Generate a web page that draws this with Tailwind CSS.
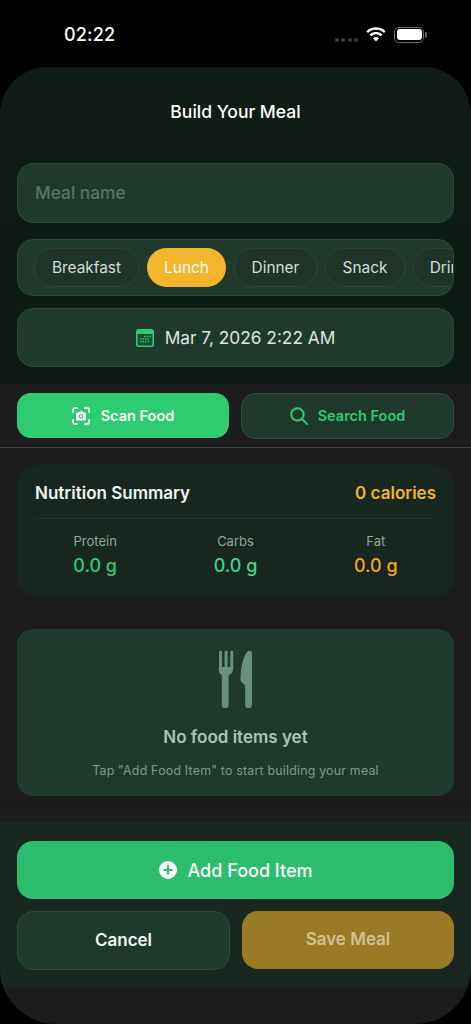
<!DOCTYPE html>
<html lang="en">
<head>
    <meta charset="UTF-8">
    <meta name="viewport" content="width=device-width, initial-scale=1.0">
    <title>Build Your Meal</title>
    <script src="https://cdn.jsdelivr.net/npm/@tailwindcss/browser@4"></script>
</head>
<body class="bg-black font-['Inter',sans-serif]">
    <div class="flex flex-col w-[471px] h-[1024px] overflow-hidden">
        <!-- Status bar -->
        <div class="h-[67px] shrink-0 relative flex items-start justify-between pl-[64px] pr-[44px] pt-[23px]">
            <span class="text-white text-[18px] leading-[24px] font-medium tracking-[0.2px]">02:22</span>
            <div class="flex items-center gap-[6px] h-[24px]">
                <div class="flex gap-[2.5px] mt-[9px]">
                    <span class="w-[4px] h-[4px] rounded-full bg-[#3d3d3d]"></span>
                    <span class="w-[4px] h-[4px] rounded-full bg-[#3d3d3d]"></span>
                    <span class="w-[4px] h-[4px] rounded-full bg-[#3d3d3d]"></span>
                    <span class="w-[4px] h-[4px] rounded-full bg-[#3d3d3d]"></span>
                </div>
                <svg width="20" height="15" viewBox="0 0 20 15" class="mx-[2px] -mt-[2px]">
                    <path d="M1.2 5.2 A12.4 12.4 0 0 1 18.8 5.2" fill="none" stroke="#fff" stroke-width="2.4"/>
                    <path d="M4.4 8.4 A7.9 7.9 0 0 1 15.6 8.4" fill="none" stroke="#fff" stroke-width="2.4"/>
                    <path d="M10 14.6 L6.9 11.2 A4.4 4.4 0 0 1 13.1 11.2 Z" fill="#fff"/>
                </svg>
                <div class="flex items-center -mt-[1px]">
                    <div class="w-[30px] h-[16px] rounded-[5px] border border-[#6a6a6a] p-[1.5px]">
                        <div class="w-full h-full rounded-[3px] bg-white"></div>
                    </div>
                    <span class="w-[2px] h-[6px] ml-[1px] rounded-r-full bg-[#6a6a6a]"></span>
                </div>
            </div>
        </div>

        <!-- Sheet -->
        <div class="flex-1 flex flex-col rounded-t-[48px] rounded-b-[56px] overflow-hidden bg-[#1c1c1e]">
            <!-- Form section -->
            <div class="h-[317px] shrink-0 px-[17px] bg-gradient-to-b from-[#0f1d16] to-[#0e1a14]">
                <h1 class="h-[96px] pt-[33px] text-center text-white text-[17.5px] leading-[24px] font-medium">Build Your Meal</h1>
                <div class="h-[60px] flex items-center px-[17px] rounded-[16px] bg-[#1f3a2d] border border-[#2a4a39] text-[#557566] text-[17.300px] font-medium">Meal name</div>
                <div class="mt-[16px] h-[57px] flex items-center gap-[8px] pl-[16px] rounded-[16px] bg-[#1f3a2d] border border-[#2a4a39] overflow-hidden">
                    <span class="shrink-0 h-[39px] w-[105px] flex items-center justify-center rounded-full bg-[#1f3329] border border-[#2b4436] text-[#d5ddd8] text-[15.400px]">Breakfast</span>
                    <span class="shrink-0 h-[39px] w-[79px] flex items-center justify-center rounded-full bg-[#f2b52c] text-white text-[15.400px]">Lunch</span>
                    <span class="shrink-0 h-[39px] w-[83px] flex items-center justify-center rounded-full bg-[#1f3329] border border-[#2b4436] text-[#d5ddd8] text-[15.400px]">Dinner</span>
                    <span class="shrink-0 h-[39px] w-[80px] flex items-center justify-center rounded-full bg-[#1f3329] border border-[#2b4436] text-[#d5ddd8] text-[15.400px]">Snack</span>
                    <span class="shrink-0 h-[39px] w-[80px] flex items-center justify-center rounded-full bg-[#1f3329] border border-[#2b4436] text-[#d5ddd8] text-[15.400px]">Drinks</span>
                </div>
                <div class="mt-[12px] h-[59px] flex items-center justify-center gap-[11px] rounded-[16px] bg-[#1f3a2d] border border-[#2a4a39] text-[#dfe5e1] text-[17.300px]">
                    <svg width="18" height="18" viewBox="0 0 18 18">
                        <rect x="0.8" y="0.8" width="16.4" height="16.4" rx="2" fill="#1f4a33" stroke="#2ecc71" stroke-width="1.6"/>
                        <rect x="1" y="1" width="16" height="4" fill="#2ecc71"/>
                        <path d="M8 7.5h1.5M10.8 7.5h1.5M13.3 7.5h1.5M4 10h1.5M6.5 10h1.5M9 10h1.5M11.5 10h1.5M4 12.6h1.5M6.5 12.6h1.5M9 12.6h1.5M11.5 12.6h1.5" stroke="#2ecc71" stroke-width="1.3" fill="none"/>
                    </svg>
                    <span>Mar 7, 2026 2:22 AM</span>
                </div>
            </div>

            <!-- Scan / search -->
            <div class="h-[64px] shrink-0 flex gap-[12px] px-[17px] pt-[9px] border-b border-[#34443c]">
                <div class="w-[212px] h-[45px] flex items-center justify-center gap-[11px] rounded-[14px] bg-[#2ecc71] text-white text-[14.500px] font-semibold">
                    <svg width="18" height="18" viewBox="0 0 18 18" fill="none">
                        <path d="M1 5V3a2 2 0 0 1 2-2h2M13 1h2a2 2 0 0 1 2 2v2M17 13v2a2 2 0 0 1-2 2h-2M5 17H3a2 2 0 0 1-2-2v-2" stroke="#fff" stroke-width="1.8" stroke-linecap="round"/>
                        <path d="M4 6.4a1 1 0 0 1 1-1h1.700l.9-1.200h2.800l.9 1.200H13a1 1 0 0 1 1 1v6a1 1 0 0 1-1 1H5a1 1 0 0 1-1-1z" fill="#fff"/>
                        <circle cx="9" cy="9.2" r="2.2" fill="#2ecc71"/>
                        <circle cx="9" cy="9.2" r="1.1" fill="#fff"/>
                    </svg>
                    <span>Scan Food</span>
                </div>
                <div class="w-[213px] h-[46px] flex items-center justify-center gap-[10px] rounded-[14px] bg-[#1f3a2d] border border-[#2a4f3b] text-[#2ecc71] text-[14.500px] font-semibold">
                    <svg width="18" height="18" viewBox="0 0 18 18" fill="none" stroke="#2ecc71" stroke-width="2" stroke-linecap="round">
                        <circle cx="7.4" cy="7.4" r="6.2"/>
                        <path d="M12 12l5 5"/>
                    </svg>
                    <span>Search Food</span>
                </div>
            </div>

            <!-- Nutrition summary -->
            <div class="mx-[17px] mt-[17px] h-[131px] shrink-0 rounded-[18px] bg-[#17271f] px-[18px]">
                <div class="h-[54px] pt-[5px] flex items-center justify-between border-b border-[#20322a]">
                    <span class="text-[#f2f5f3] text-[17px] font-semibold">Nutrition Summary</span>
                    <span class="text-[#f0b429] text-[17px] font-semibold">0 calories</span>
                </div>
                <div class="grid grid-cols-3 gap-[20px] pt-[13px]">
                    <div class="flex flex-col items-center">
                        <span class="text-[#93a89d] text-[13px] leading-[18px]">Protein</span>
                        <span class="mt-[3px] text-[#2ecc71] text-[18px] leading-[26px] font-medium">0.0 g</span>
                    </div>
                    <div class="flex flex-col items-center">
                        <span class="text-[#93a89d] text-[13px] leading-[18px]">Carbs</span>
                        <span class="mt-[3px] text-[#3dd68c] text-[18px] leading-[26px] font-medium">0.0 g</span>
                    </div>
                    <div class="flex flex-col items-center">
                        <span class="text-[#93a89d] text-[13px] leading-[18px]">Fat</span>
                        <span class="mt-[3px] text-[#f5a623] text-[18px] leading-[26px] font-medium">0.0 g</span>
                    </div>
                </div>
            </div>

            <!-- Empty state -->
            <div class="mx-[17px] mt-[33px] h-[167px] shrink-0 rounded-[16px] bg-[#1f3a2d] flex flex-col items-center pt-[21px]">
                <svg width="36" height="58" viewBox="0 0 36 58" fill="#6a8f7f">
                    <path d="M1 2a1.500 1.500 0 0 1 3 0v15h2.600V2a1.500 1.500 0 0 1 3 0v15h2.700V2a1.500 1.500 0 0 1 3 0v16c0 4-2.200 6.400-4.700 7.300V55a3.400 3.400 0 0 1-6.800 0V25.300C2.200 24.400 0 22 1 18z"/>
                    <path d="M28.500 2.400c1-2 5.500-2.600 5.500.6V55a3.400 3.400 0 0 1-6.800 0V35.500l-3.400-3.200c-1-.9-1.300-1.800-1.300-3.100C22.500 19 24.500 9 28.500 2.400z"/>
                </svg>
                <span class="mt-[17px] text-[#a9c4b6] text-[17px] leading-[24px] font-semibold">No food items yet</span>
                <span class="mt-[13px] text-[#7e9a8c] text-[12.400px] leading-[18px] tracking-[0.2px]">Tap "Add Food Item" to start building your meal</span>
            </div>

            <!-- Footer actions -->
            <div class="mt-[26px] h-[165px] shrink-0 bg-[#18271f] px-[17px] pt-[19px] shadow-[0_-8px_14px_rgba(24,39,31,0.25)]">
                <div class="h-[58px] flex items-center justify-center gap-[11px] rounded-[16px] bg-[#2dbd6e] text-white text-[18px] font-medium">
                    <svg width="18" height="18" viewBox="0 0 18 18">
                        <circle cx="9" cy="9" r="9" fill="#fff"/>
                        <path d="M9 5v8M5 9h8" stroke="#2dbd6e" stroke-width="2" stroke-linecap="round"/>
                    </svg>
                    <span>Add Food Item</span>
                </div>
                <div class="mt-[12px] flex gap-[12px]">
                    <div class="w-[213px] h-[59px] flex items-center justify-center rounded-[16px] bg-[#1f3a2d] border border-[#2c4a3b] text-[#f2f5f3] text-[17px] font-semibold">Cancel</div>
                    <div class="w-[212px] h-[58px] flex items-center justify-center rounded-[16px] bg-[#9a7b25] text-[#cfc193] text-[17px] font-semibold">Save Meal</div>
                </div>
            </div>
        </div>
    </div>
</body>
</html>
